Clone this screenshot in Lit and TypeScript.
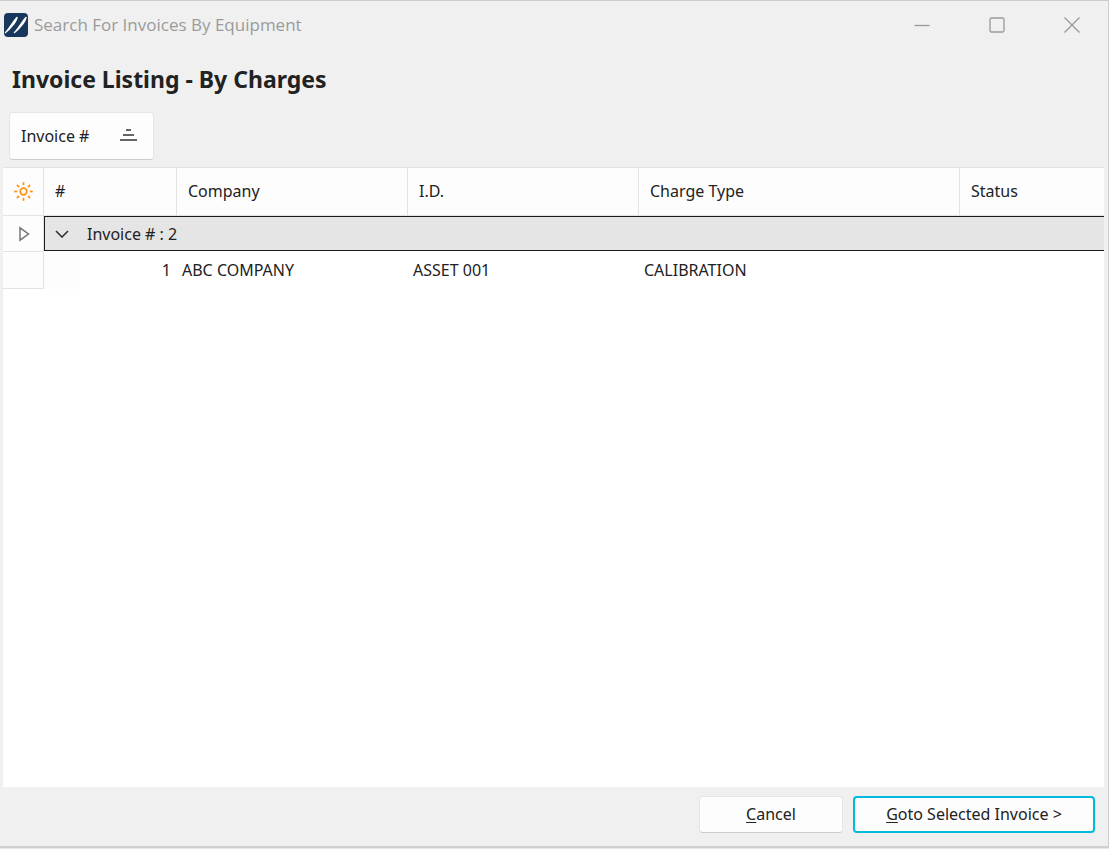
import { LitElement, html, css, svg } from "lit";
import { customElement, state } from "lit/decorators.js";

interface ChargeRow {
  no: number;
  company: string;
  id: string;
  type: string;
  status: string;
}

const rows: ChargeRow[] = [
  { no: 1, company: "ABC COMPANY", id: "ASSET 001", type: "CALIBRATION", status: "" },
];

const sunRays = [0, 45, 90, 135, 180, 225, 270, 315];

@customElement("app-root")
export class AppRoot extends LitElement {
  @state() private expanded = true;

  static styles = css`
    :host {
      display: block;
      --ink: #222;
      --line: #e3e3e3;
      padding-bottom: 1px;
      background: #e8e8e8;
      font: 16px/24px "Noto Sans", "Open Sans", sans-serif;
      color: var(--ink);
    }
    * {
      box-sizing: border-box;
    }
    svg {
      display: block;
      flex: none;
    }
    button {
      font: inherit;
      color: inherit;
      background: none;
      border: 0;
      padding: 0;
      margin: 0;
    }
    .window {
      display: flex;
      flex-direction: column;
      height: calc(100vh - 1px);
      background: #f0f0f0;
      border-top: 1px solid #ccc;
      border-right: 1px solid #ccc;
      border-bottom: 2px solid #d0d0d0;
    }
    .titlebar {
      display: flex;
      align-items: center;
      height: 48px;
      padding-left: 4px;
      gap: 6px;
      color: #9b9b9b;
    }
    .caption {
      flex: 1;
      font-family: "Open Sans", sans-serif;
      font-size: 17px;
    }
    .controls {
      display: flex;
    }
    .control {
      display: grid;
      place-items: center;
      width: 75px;
      height: 48px;
      padding-left: 2px;
    }
    h1 {
      margin: 0;
      padding: 14px 12px;
      font-size: 23px;
      line-height: 32px;
      font-weight: 700;
    }
    .grouping {
      padding: 3px 9px 7px;
    }
    .chip {
      display: flex;
      align-items: center;
      justify-content: space-between;
      width: 145px;
      height: 48px;
      padding: 0 16px 0 11px;
    }
    .chip svg {
      margin-bottom: 2px;
    }
    .raised {
      background: #fdfdfd;
      border: 1px solid #e5e5e5;
      border-bottom-color: #ccc;
      border-radius: 4px;
    }
    .grid {
      flex: 1;
      min-height: 0;
      margin: 0 4px 0 3px;
      background: #fff;
      overflow: hidden;
    }
    table {
      width: 100%;
      table-layout: fixed;
      border-spacing: 0;
    }
    .c-mark {
      width: 41px;
    }
    .c-no {
      width: 133px;
    }
    .c-text {
      width: 231px;
    }
    .c-type {
      width: 321px;
    }
    th,
    td {
      padding: 0;
      text-align: left;
      font-weight: 400;
      white-space: nowrap;
    }
    thead th {
      height: 49px;
      padding: 0 0 2px 11px;
      background: #fdfdfd;
      border-top: 1px solid var(--line);
      border-bottom: 1px solid var(--line);
      border-right: 1px solid var(--line);
    }
    thead th:last-child {
      border-right: 0;
    }
    thead .mark {
      padding: 0;
    }
    .mark {
      background: #fdfdfd;
      border-right: 1px solid var(--line);
      border-bottom: 1px solid var(--line);
    }
    .mark svg {
      margin: 0 auto;
    }
    .group td {
      height: 36px;
    }
    .group .mark {
      padding-left: 2px;
    }
    .group .band {
      vertical-align: top;
    }
    .toggle {
      display: flex;
      align-items: center;
      gap: 18px;
      width: 100%;
      height: 35px;
      padding-left: 10px;
      background: #e5e5e5;
      border: 1px solid #1a1a1a;
      border-right: 0;
    }
    .data td {
      height: 37px;
      padding: 0 0 2px 5px;
    }
    .data .mark {
      padding: 0;
    }
    .data .no {
      padding-right: 6px;
      text-align: right;
      background: linear-gradient(90deg, #fdfdfd 36px, #fff 36px);
    }
    .actions {
      display: flex;
      justify-content: flex-end;
      gap: 10px;
      padding: 9px 13px 13px;
    }
    .action {
      height: 37px;
      width: 144px;
      padding-bottom: 2px;
    }
    .primary {
      width: 242px;
      background: #fdfdfd;
      border: 2px solid #00bbdd;
      border-radius: 4px;
    }
    u {
      text-underline-offset: 2px;
      text-decoration-thickness: 1px;
      text-decoration-skip-ink: none;
    }
  `;

  private toggle() {
    this.expanded = !this.expanded;
  }

  render() {
    return html`
      <main class="window">
        <header class="titlebar">
          <svg width="24" height="24" viewBox="0 0 24 24" aria-hidden="true">
            <rect width="24" height="24" rx="4" fill="#17375c" />
            <path d="M1.5 19.5C4 17.5 9 9 13 4.5C12 9 6 16 1.5 19.5ZM10.5 19.5C13 17.5 18 9 22 4.5C21 9 15 16 10.5 19.5Z" fill="#fff" stroke="#fff" stroke-width="1.5" stroke-linejoin="round" />
          </svg>
          <span class="caption">Search For Invoices By Equipment</span>
          <div class="controls">
            <button class="control" aria-label="Minimize">
              <svg width="16" height="16" viewBox="0 0 16 16"><path d="M0.5 8.5h15" stroke="#999" stroke-width="1.3" /></svg>
            </button>
            <button class="control" aria-label="Maximize">
              <svg width="16" height="16" viewBox="0 0 16 16"><rect x="1" y="1" width="14" height="14" rx="1.5" fill="none" stroke="#999" stroke-width="1.3" /></svg>
            </button>
            <button class="control" aria-label="Close">
              <svg width="16" height="16" viewBox="0 0 16 16"><path d="M0.5 0.5l15 15M15.5 0.5l-15 15" stroke="#999" stroke-width="1.3" /></svg>
            </button>
          </div>
        </header>

        <h1>Invoice Listing - By Charges</h1>

        <div class="grouping">
          <button class="chip raised">
            Invoice #
            <svg width="17" height="12" viewBox="0 0 17 12" aria-hidden="true">
              <path d="M6 1h5M3 6h11M0 11h17" stroke="#333" stroke-width="1.6" />
            </svg>
          </button>
        </div>

        <section class="grid">
          <table>
            <colgroup>
              <col class="c-mark" />
              <col class="c-no" />
              <col class="c-text" />
              <col class="c-text" />
              <col class="c-type" />
              <col />
            </colgroup>
            <thead>
              <tr>
                <th class="mark" aria-label="Options">
                  <svg width="20" height="20" viewBox="0 0 20 20" fill="none" stroke="#ff9110" stroke-width="1.7">
                    <circle cx="10.5" cy="9.5" r="3.3" />
                    ${sunRays.map((a) => svg`<path d="M10.5 0.2v3" transform="rotate(${a} 10.5 9.5)" />`)}
                  </svg>
                </th>
                <th>#</th>
                <th>Company</th>
                <th>I.D.</th>
                <th>Charge Type</th>
                <th>Status</th>
              </tr>
            </thead>
            <tbody>
              <tr class="group">
                <td class="mark">
                  <svg width="12" height="16" viewBox="0 0 12 16"><path d="M2 1.8v12.4l8.5-6.2z" fill="none" stroke="#777" stroke-width="1.5" /></svg>
                </td>
                <td class="band" colspan="5">
                  <button class="toggle" aria-expanded=${this.expanded} @click=${this.toggle}>
                    <svg width="14" height="8" viewBox="0 0 14 8"><path d="M1 1l6 6l6-6" fill="none" stroke="#333" stroke-width="1.6" /></svg>
                    Invoice # : 2
                  </button>
                </td>
              </tr>
              ${this.expanded
                ? rows.map(
                    (r) => html`<tr class="data">
                      <td class="mark"></td>
                      <td class="no">${r.no}</td>
                      <td>${r.company}</td>
                      <td>${r.id}</td>
                      <td>${r.type}</td>
                      <td>${r.status}</td>
                    </tr>`
                  )
                : null}
            </tbody>
          </table>
        </section>

        <footer class="actions">
          <button class="action raised"><u>C</u>ancel</button>
          <button class="action primary"><u>G</u>oto Selected Invoice &gt;</button>
        </footer>
      </main>
    `;
  }
}
